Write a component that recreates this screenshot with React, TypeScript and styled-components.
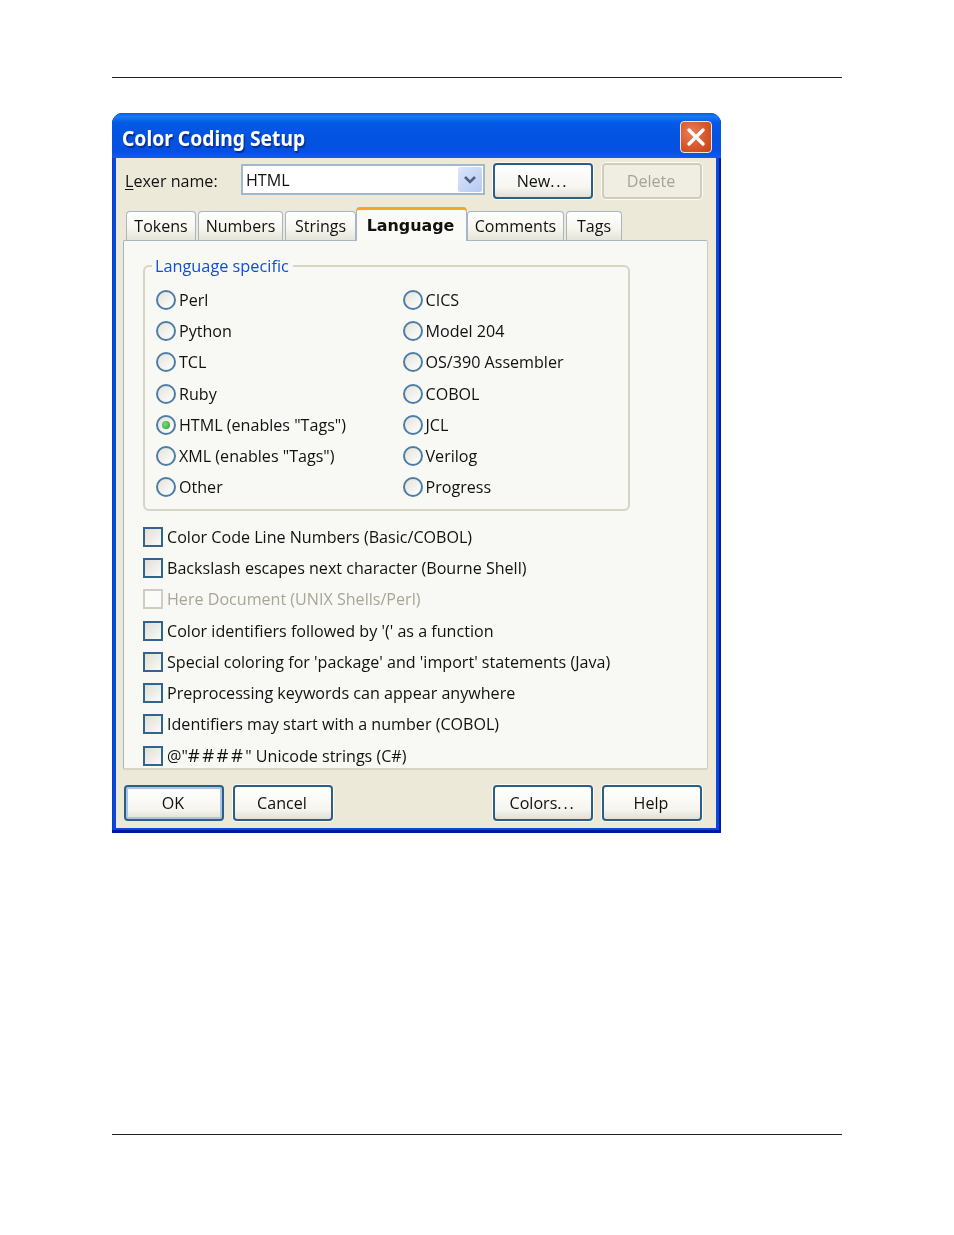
import React from "react";
import styled, { createGlobalStyle } from "styled-components";

const Global = createGlobalStyle`
  html, body { margin: 0; padding: 0; background: #fff; }
  body { font-family: "Open Sans", "Noto Sans", sans-serif; }
`;

const Page = styled.div`
  width: 954px;
  height: 1235px;
  box-sizing: border-box;
  padding: 77px 112px 0;
  display: flex;
  flex-direction: column;
`;

const Rule = styled.div`
  height: 1px;
  background: #222;
  flex: none;
`;

const Win = styled.div`
  width: 609px;
  height: 720px;
  margin: 35px 0 301px;
  flex: none;
  box-sizing: border-box;
  display: flex;
  flex-direction: column;
  border-radius: 11px 11px 0 0;
  background: #0a48d8;
  box-shadow: inset -2px -3px 0 #00189c, inset 1px 0 0 #0a3cc4;
  overflow: hidden;
  filter: blur(0.45px);
`;

const TitleBar = styled.div`
  height: 45px;
  flex: none;
  box-sizing: border-box;
  padding: 8px 9px 0 10px;
  display: flex;
  justify-content: space-between;
  align-items: flex-start;
  background: linear-gradient(180deg, #0a5ae8 0%, #1a78f4 8%, #0458e6 22%, #0352e0 60%, #0450e4 85%, #0a5ff0 100%);
`;

const Title = styled.div`
  color: #fff;
  font-family: "Noto Sans", sans-serif;
  font-weight: 700;
  font-size: 20.5px;
  line-height: 34px;
  transform: scaleX(0.94);
  transform-origin: left center;
  text-shadow: 1.5px 1.5px 1px #0a2f90;
`;

const CloseBtn = styled.div`
  width: 32px;
  height: 32px;
  box-sizing: border-box;
  border: 1px solid #f0e4dc;
  border-radius: 4px;
  background: radial-gradient(circle at 35% 35%, #e8805c 0%, #d95a30 50%, #c63f14 100%);
  display: flex;
  align-items: center;
  justify-content: center;
`;

const Body = styled.div`
  flex: 1;
  margin: 0 5px 5px 4px;
  background: #ece9d8;
  box-sizing: border-box;
  padding: 5px 8px 0 7px;
  display: flex;
  flex-direction: column;
  color: #111;
  font-size: 16.1px;
`;

const TopRow = styled.div`
  display: flex;
  align-items: center;
  height: 36px;
  flex: none;
`;

const LexerLabel = styled.span`
  width: 116px;
  margin-left: 2px;
  flex: none;
  font-size: 16.1px;
`;

const Underlined = styled.span`
  text-decoration: underline;
  text-underline-offset: 2px;
`;

const Combo = styled.div`
  width: 244px;
  height: 31px;
  margin-top: -3px;
  box-sizing: border-box;
  background: #fff;
  border: 2px solid #a3b8cc;
  display: flex;
  align-items: center;
  justify-content: space-between;
  padding: 0 1px 0 3px;
  font-size: 16.1px;
`;

const ComboArrow = styled.div`
  width: 24px;
  height: 25px;
  border-radius: 2px;
  background: linear-gradient(135deg, #dbe6fb, #b5c9f3);
  display: flex;
  align-items: center;
  justify-content: center;
`;

const Btn = styled.div<{ $default?: boolean; $disabled?: boolean; $gap?: number }>`
  width: 100px;
  height: 36px;
  flex: none;
  margin-left: ${(p) => p.$gap ?? 0}px;
  box-sizing: border-box;
  padding-right: 2px;
  border-radius: 4px;
  border: 2px solid ${(p) => (p.$disabled ? "#cfcdbd" : "#2c5f86")};
  background: ${(p) => (p.$disabled ? "#f0eee2" : "linear-gradient(180deg, #ffffff 0%, #f6f5ef 70%, #e2e0d4 100%)")};
  box-shadow: ${(p) => (p.$default ? "inset 0 0 0 2px #a9c4e8" : "0 0 0 1px #fbfaf4")};
  color: ${(p) => (p.$disabled ? "#a5a397" : "#111")};
  display: flex;
  align-items: center;
  justify-content: center;
  font-size: 16.1px;
`;

const Dots = styled.span`
  letter-spacing: 1.8px;
  margin-right: -1px;
`;

const Hashes = styled.span`
  font-size: 18.5px;
  line-height: 1;
  letter-spacing: 2.4px;
`;

const TabStrip = styled.div`
  display: flex;
  align-items: flex-end;
  height: 34px;
  margin-top: 8px;
  padding-left: 3px;
  flex: none;
  position: relative;
  z-index: 1;
`;

const Tab = styled.div<{ $w: number; $gap?: number }>`
  width: ${(p) => p.$w}px;
  height: 29px;
  margin-left: ${(p) => p.$gap ?? 2}px;
  margin-bottom: 1px;
  box-sizing: border-box;
  border: 1.5px solid #a5b6c4;
  border-bottom: none;
  border-radius: 4px 4px 0 0;
  background: linear-gradient(180deg, #fff 0%, #f6f5ee 60%, #e6e4d8 100%);
  display: flex;
  align-items: center;
  justify-content: center;
  font-size: 16px;
`;

const ActiveTab = styled.div<{ $w: number }>`
  width: ${(p) => p.$w}px;
  height: 34px;
  box-sizing: border-box;
  border-top: 3px solid #f5a623;
  border-left: 1.5px solid #a5b6c4;
  border-right: 1.5px solid #a5b6c4;
  border-radius: 4px 4px 0 0;
  background: #fafaf7;
  display: flex;
  align-items: center;
  justify-content: center;
  font-family: "DejaVu Sans", sans-serif;
  font-size: 15.9px;
  font-weight: 700;
  padding: 0 2px 0 0;
`;

const Panel = styled.div`
  height: 530px;
  flex: none;
  margin-top: -1px;
  box-sizing: border-box;
  border: 1.5px solid #a5b6c4;
  border-right-color: #cfcdbd;
  border-bottom: 2.5px solid #d8d5c6;
  border-radius: 2px;
  background: #f8f8f5;
  padding: 24px 0 0 19px;
  overflow: hidden;
`;

const Group = styled.div`
  width: 487px;
  height: 246px;
  box-sizing: border-box;
  border: 2px solid #d6d4c2;
  border-radius: 6px;
  padding: 17px 0 0 11px;
  position: relative;
  display: grid;
  grid-template-columns: 246.5px 1fr;
  grid-auto-flow: column;
  grid-template-rows: repeat(7, 31.3px);
`;

const Legend = styled.span`
  position: absolute;
  top: -12px;
  left: 7px;
  padding: 0 4px 0 3px;
  background: #f8f8f5;
  color: #0d4fd6;
  font-size: 16.3px;
  line-height: 22px;
`;

const OptionRow = styled.label`
  display: flex;
  align-items: center;
  gap: 3px;
  font-size: 16.1px;
  white-space: nowrap;
`;

const RadioCircle = styled.span`
  width: 20px;
  height: 20px;
  flex: none;
  box-sizing: border-box;
  border-radius: 50%;
  border: 2px solid #4d7ea8;
  background: linear-gradient(135deg, #e4e2d8, #fff);
  display: flex;
  align-items: center;
  justify-content: center;
`;

const RadioDot = styled.span`
  width: 8px;
  height: 8px;
  border-radius: 50%;
  background: radial-gradient(circle at 40% 40%, #7be07b, #1f9a2d);
`;

const Checks = styled.div`
  margin-top: 10.3px;
  display: grid;
  grid-auto-rows: 31.25px;
`;

const CheckRow = styled.label<{ $disabled?: boolean }>`
  display: flex;
  align-items: center;
  gap: 4px;
  font-size: 16.1px;
  white-space: nowrap;
  color: ${(p) => (p.$disabled ? "#a8a697" : "#111")};
`;

const CheckBox = styled.span<{ $disabled?: boolean }>`
  width: 20px;
  height: 20px;
  flex: none;
  box-sizing: border-box;
  border: 2px solid ${(p) => (p.$disabled ? "#cfcdbd" : "#33648f")};
  background: ${(p) => (p.$disabled ? "#fbfbf9" : "linear-gradient(135deg, #e0dfd6, #fafaf8)")};
`;

const CheckText = styled.span`
  display: inline;
`;

const BottomRow = styled.div`
  display: flex;
  margin-top: 15px;
  padding-left: 1px;
  flex: none;
`;

const radiosLeft = ["Perl", "Python", "TCL", "Ruby", 'HTML (enables "Tags")', 'XML (enables "Tags")', "Other"];
const radiosRight = ["CICS", "Model 204", "OS/390 Assembler", "COBOL", "JCL", "Verilog", "Progress"];
const checks: React.ReactNode[] = [
  "Color Code Line Numbers (Basic/COBOL)",
  "Backslash escapes next character (Bourne Shell)",
  "Here Document (UNIX Shells/Perl)",
  "Color identifiers followed by '(' as a function",
  "Special coloring for 'package' and 'import' statements (Java)",
  "Preprocessing keywords can appear anywhere",
  "Identifiers may start with a number (COBOL)",
  <>@"<Hashes>####</Hashes>" Unicode strings (C#)</>,
];

export default function App() {
  return (
    <Page>
      <Global />
      <Rule />
      <Win>
        <TitleBar>
          <Title>Color Coding Setup</Title>
          <CloseBtn>
            <svg width="20" height="20" viewBox="0 0 20 20">
              <path d="M3 3 L17 17 M17 3 L3 17" stroke="#fff" strokeWidth="3.4" strokeLinecap="round" />
            </svg>
          </CloseBtn>
        </TitleBar>
        <Body>
          <TopRow>
            <LexerLabel>
              <Underlined>L</Underlined>exer name:
            </LexerLabel>
            <Combo>
              HTML
              <ComboArrow>
                <svg width="14" height="10" viewBox="0 0 14 10">
                  <path d="M2 2 L7 7 L12 2" stroke="#4d6185" strokeWidth="2.6" fill="none" />
                </svg>
              </ComboArrow>
            </Combo>
            <Btn $gap={8}>New<Dots>...</Dots></Btn>
            <Btn $gap={9} $disabled>Delete</Btn>
          </TopRow>
          <TabStrip>
            <Tab $w={70} $gap={0}>Tokens</Tab>
            <Tab $w={85}>Numbers</Tab>
            <Tab $w={71}>Strings</Tab>
            <ActiveTab $w={111}>Language</ActiveTab>
            <Tab $w={97} $gap={0}>Comments</Tab>
            <Tab $w={56}>Tags</Tab>
          </TabStrip>
          <Panel>
            <Group>
              <Legend>Language specific</Legend>
              {radiosLeft.concat(radiosRight).map((t) => (
                <OptionRow key={t}>
                  <RadioCircle>{t.startsWith("HTML") && <RadioDot />}</RadioCircle>
                  {t}
                </OptionRow>
              ))}
            </Group>
            <Checks>
              {checks.map((t, i) => (
                <CheckRow key={i} $disabled={i === 2}>
                  <CheckBox $disabled={i === 2} />
                  <CheckText>{t}</CheckText>
                </CheckRow>
              ))}
            </Checks>
          </Panel>
          <BottomRow>
            <Btn $default>OK</Btn>
            <Btn $gap={9}>Cancel</Btn>
            <Btn $gap={160}>Colors<Dots>...</Dots></Btn>
            <Btn $gap={9}>Help</Btn>
          </BottomRow>
        </Body>
      </Win>
      <Rule />
    </Page>
  );
}
